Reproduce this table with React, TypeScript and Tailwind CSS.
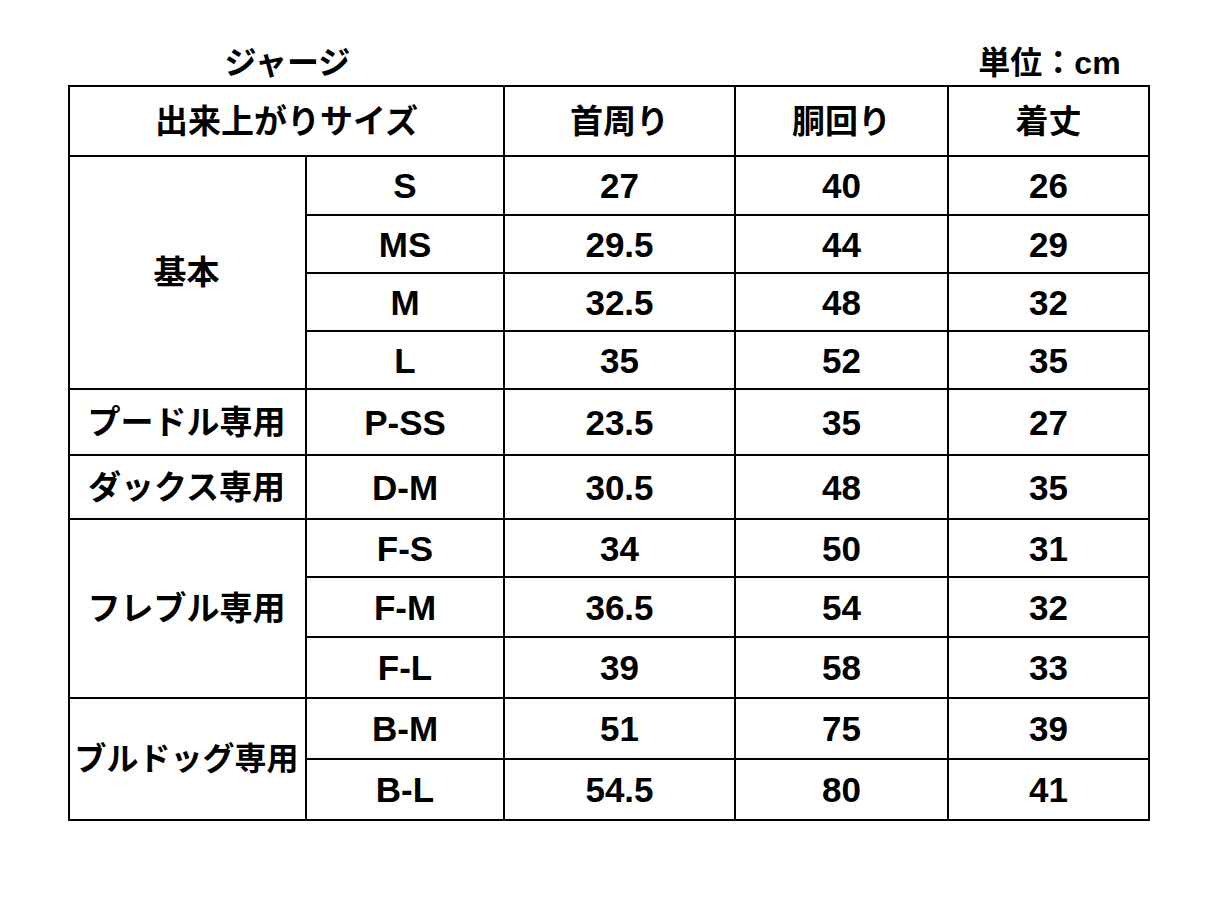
import { Fragment } from 'react';

const groups = [
  { label: '基本', span: 'row-span-4', size: 'text-[33px]', rows: [['S', '27', '40', '26'], ['MS', '29.5', '44', '29'], ['M', '32.5', '48', '32'], ['L', '35', '52', '35']] },
  { label: 'プードル専用', span: 'row-span-1', size: 'text-[33px]', rows: [['P-SS', '23.5', '35', '27']] },
  { label: 'ダックス専用', span: 'row-span-1', size: 'text-[33px]', rows: [['D-M', '30.5', '48', '35']] },
  { label: 'フレブル専用', span: 'row-span-3', size: 'text-[33px]', rows: [['F-S', '34', '50', '31'], ['F-M', '36.5', '54', '32'], ['F-L', '39', '58', '33']] },
  { label: 'ブルドッグ専用', span: 'row-span-2', size: 'text-[32px]', rows: [['B-M', '51', '75', '39'], ['B-L', '54.5', '80', '41']] },
];

const font = 'font-["Liberation_Sans","Noto_Sans_CJK_JP",sans-serif] font-bold text-black';
const cell = 'border-r-2 border-b-2 border-black flex items-center justify-center leading-none';

export default function App() {
  return (
    <div className={`w-[1229px] h-[899px] bg-white pl-[68px] ${font}`}>
      {/* title row */}
      <div className="grid grid-cols-[2px_237px_198px_231px_213px_201px] h-[85px] items-end pb-[6px]">
        <div />
        <div className="col-span-2 text-center text-[32px] leading-none">ジャージ</div>
        <div />
        <div />
        <div className="text-center text-[32px] leading-none">単位：cm</div>
      </div>

      {/* size table */}
      <div className="w-[1082px] border-l-2 border-t-2 border-black grid grid-cols-[237px_198px_231px_213px_201px] grid-rows-[70px_59px_58px_58px_58px_66px_64px_58px_60px_61px_61px_61px]">
        <div className={`${cell} col-span-2 text-[33px]`}>出来上がりサイズ</div>
        <div className={`${cell} text-[33px]`}>首周り</div>
        <div className={`${cell} text-[33px]`}>胴回り</div>
        <div className={`${cell} text-[33px]`}>着丈</div>

        {groups.map(g => (
          <Fragment key={g.label}>
            <div className={`${cell} ${g.span} ${g.size} whitespace-nowrap pr-[2px]`}>{g.label}</div>
            {g.rows.map(r => r.map((v, i) => (
              <div key={g.label + r[0] + i} className={`${cell} text-[35px]`}>{v}</div>
            )))}
          </Fragment>
        ))}
      </div>
    </div>
  );
}
